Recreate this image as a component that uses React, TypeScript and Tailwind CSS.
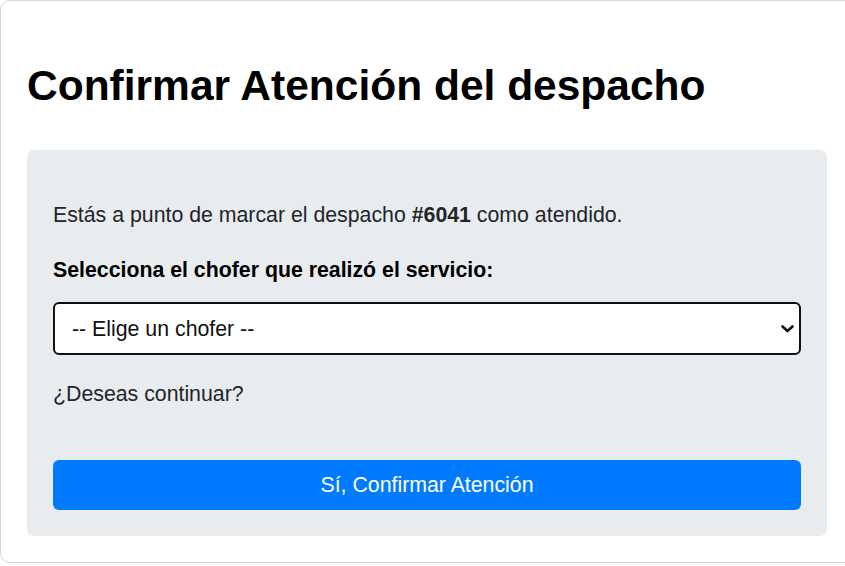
import { useState } from "react";

const ChevronDown = () => (
  <svg width="13" height="8" viewBox="0 0 13 8" fill="none" className="pointer-events-none absolute right-[7px] top-[23px]">
    <path d="M1.5 1.5 L6.5 6 L11.5 1.5" stroke="#111" strokeWidth="2.6" strokeLinecap="round" strokeLinejoin="round" />
  </svg>
);

const App = () => {
  const [chofer, setChofer] = useState("");

  return (
    <div className="w-[845px] h-[566px] overflow-hidden bg-white font-['Liberation_Sans',Arial,sans-serif]">
      <div className="w-[854px] rounded-[10px] border border-[#d6d6d6] px-[26px] pb-[26px]">
        <h1 className="mt-[61px] mb-[40px] text-[42.5px] leading-[48px] font-bold text-black">
          Confirmar Atención del despacho
        </h1>

        <div className="rounded-[7px] bg-[#e9ecef] px-[26px] pt-[53px] pb-[26px] text-[21.3px] leading-[24px] text-[#212529]">
          <p>
            Estás a punto de marcar el despacho <strong>#6041</strong> como atendido.
          </p>

          <label htmlFor="chofer" className="mt-[31px] block font-bold text-black">
            Selecciona el chofer que realizó el servicio:
          </label>

          <div className="relative mt-[20px]">
            <select
              id="chofer"
              value={chofer}
              onChange={(e) => setChofer(e.target.value)}
              className="block h-[53px] w-full appearance-none rounded-[6px] border-2 border-[#111] bg-white pl-[17px] pr-8 text-[21.3px] text-[#111] outline-none"
            >
              <option value="">-- Elige un chofer --</option>
            </select>
            <ChevronDown />
          </div>

          <p className="mt-[27px]">¿Deseas continuar?</p>

          <button
            type="button"
            className="mt-[54px] flex h-[50px] w-full items-center justify-center rounded-[6px] bg-[#007bff] text-[21.3px] text-white"
          >
            Sí, Confirmar Atención
          </button>
        </div>
      </div>
    </div>
  );
};

export default App;
